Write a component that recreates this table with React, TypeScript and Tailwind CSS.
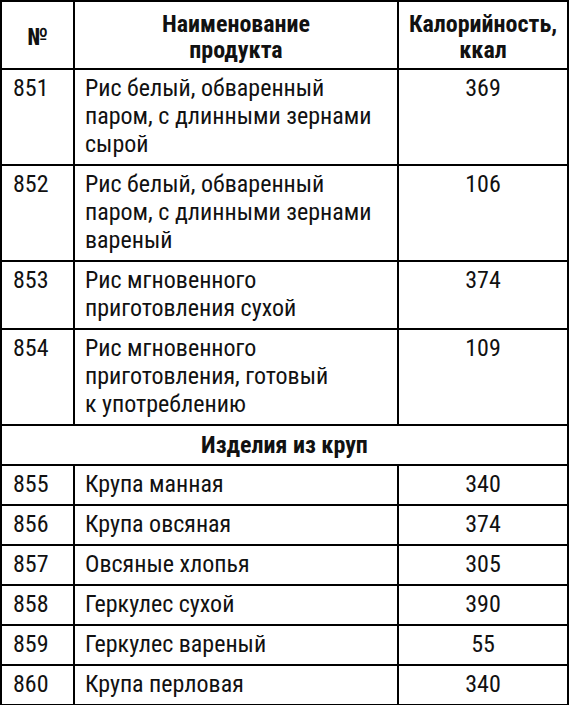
const rows: [string, string[], string][] = [
  ["851", ["Рис белый, обваренный", "паром, с длинными зернами", "сырой"], "369"],
  ["852", ["Рис белый, обваренный", "паром, с длинными зернами", "вареный"], "106"],
  ["853", ["Рис мгновенного", "приготовления сухой"], "374"],
  ["854", ["Рис мгновенного", "приготовления, готовый", "к употреблению"], "109"],
]

const rows2: [string, string, string][] = [
  ["855", "Крупа манная", "340"],
  ["856", "Крупа овсяная", "374"],
  ["857", "Овсяные хлопья", "305"],
  ["858", "Геркулес сухой", "390"],
  ["859", "Геркулес вареный", "55"],
  ["860", "Крупа перловая", "340"],
]

const cell = "border-2 border-black pt-[4px] pb-[6px]"

export default function App() {
  return (
    <div className="w-[570px] h-[705px] bg-white text-[#111] overflow-hidden font-['Roboto_Condensed','Liberation_Sans',sans-serif]">
      <table className="w-[569px] border-collapse border-2 border-black table-fixed text-[24px] leading-[28px]">
        <colgroup>
          <col className="w-[73px]" />
          <col className="w-[324px]" />
          <col />
        </colgroup>
        <thead>
          <tr className="h-[68px] font-bold leading-[26px]">
            <th className="border-2 border-black pt-[4px] text-center align-middle">№</th>
            <th className="border-2 border-black pt-[4px] text-center align-middle">
              Наименование
              <br />
              продукта
            </th>
            <th className="border-2 border-black pt-[4px] text-center align-middle">
              Калорийность,
              <br />
              ккал
            </th>
          </tr>
        </thead>
        <tbody>
          {rows.map(([n, name, kcal]) => (
            <tr key={n}>
              <td className={`${cell} pl-[11px] align-top`}>{n}</td>
              <td className={`${cell} pl-[10px] align-top`}>
                {name.map((l, i) => (
                  <div key={i}>{l}</div>
                ))}
              </td>
              <td className={`${cell} align-top text-center`}>{kcal}</td>
            </tr>
          ))}
          <tr>
            <td colSpan={3} className="border-2 border-black pt-[5px] pb-[5px] text-center font-bold">
              Изделия из круп
            </td>
          </tr>
          {rows2.map(([n, name, kcal]) => (
            <tr key={n}>
              <td className={`${cell} pl-[11px]`}>{n}</td>
              <td className={`${cell} pl-[10px]`}>{name}</td>
              <td className={`${cell} text-center`}>{kcal}</td>
            </tr>
          ))}
        </tbody>
      </table>
    </div>
  )
}
